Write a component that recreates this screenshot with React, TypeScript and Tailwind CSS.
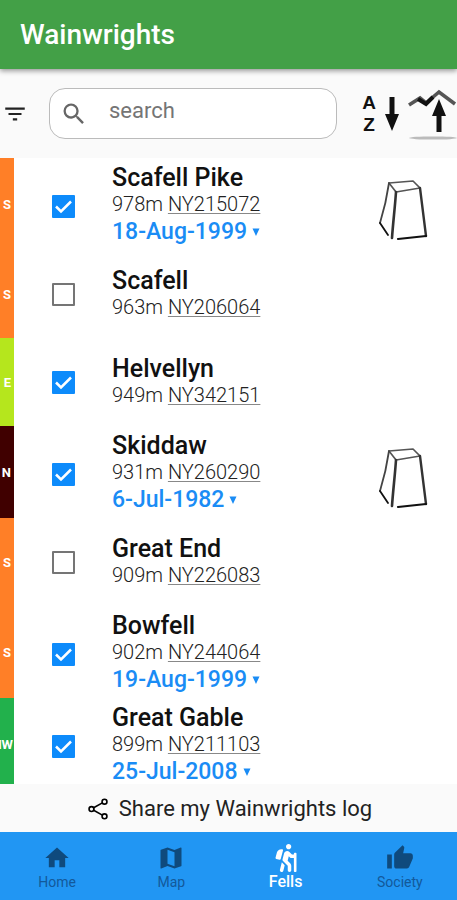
import React, { useState } from 'react';
import { FaHiking } from 'react-icons/fa';
import { IoShareSocialOutline } from 'react-icons/io5';
import { MdFilterList, MdHome, MdMap, MdSearch, MdThumbUp } from 'react-icons/md';

interface Fell {
  name: string;
  height: number;
  grid: string;
  area: string;
  climbed: boolean;
  date?: string;
  trig?: boolean;
}

const FELLS: Fell[] = [
  { name: 'Scafell Pike', height: 978, grid: 'NY215072', area: 'S', climbed: true, date: '18-Aug-1999', trig: true },
  { name: 'Scafell', height: 963, grid: 'NY206064', area: 'S', climbed: false },
  { name: 'Helvellyn', height: 949, grid: 'NY342151', area: 'E', climbed: true },
  { name: 'Skiddaw', height: 931, grid: 'NY260290', area: 'N', climbed: true, date: '6-Jul-1982', trig: true },
  { name: 'Great End', height: 909, grid: 'NY226083', area: 'S', climbed: false },
  { name: 'Bowfell', height: 902, grid: 'NY244064', area: 'S', climbed: true, date: '19-Aug-1999' },
  { name: 'Great Gable', height: 899, grid: 'NY211103', area: 'NW', climbed: true, date: '25-Jul-2008' }
];

const AREA_STYLES: Record<string, string> = {
  S: 'bg-[#ff7f27] pr-[3px]',
  E: 'bg-[#b5e61d] pr-[3px]',
  N: 'bg-[#400000] pr-[3px]',
  NW: 'bg-[#22b14c] pr-px'
};

function TrigPillar() {
  return (
    <svg viewBox="0 0 50 62" className="mt-2 w-[50px] h-[62px]" fill="none" stroke="#111" strokeLinecap="round" strokeLinejoin="round" role="img" aria-label="Trig point">
      <path d="M10 4 34 2 41 9 17 13Z" stroke="#555" strokeWidth="1.7" />
      <path d="M10 4C8 18 5 31 1 44" stroke="#444" strokeWidth="1.8" />
      <path d="M1 44 9 56" strokeWidth="1.8" />
      <path d="M17 13C16 28 14 44 13 59" stroke="#333" strokeWidth="2.6" />
      <path d="M41 9C43 24 45 40 47 57" stroke="#333" strokeWidth="2.4" />
      <path d="M19 60 47 57" strokeWidth="2.2" />
    </svg>
  );
}

function DownArrow() {
  return (
    <svg viewBox="0 0 14 36" className="w-3.5 h-9" fill="#111" aria-hidden="true">
      <path d="M4.5 1h5v17H14L7 35 0 18h4.5z" />
    </svg>
  );
}

function SummitIcon() {
  return (
    <svg viewBox="0 0 50 54" className="w-[50px] h-[54px]" fill="none" aria-hidden="true">
      <path d="M2 18 13 11 19 16 32 5 48 17" stroke="#555" strokeWidth="3.6" />
      <path d="M11 12 19 17 26 10" stroke="#111" strokeWidth="4" />
      <path d="M32 12 39 29H34.500V45H29.500V29H25z" fill="#111" />
      <ellipse cx="26" cy="51" rx="24" ry="1.600" fill="#bbb" />
    </svg>
  );
}

function FellRow({ fell }: { fell: Fell }) {
  const [climbed, setClimbed] = useState(fell.climbed);
  const id = `fell-${fell.grid}`;

  return (
    <li className={`flex shrink-0 bg-white ${fell.date ? 'h-[92px]' : 'h-[88px]'}`}>
      <div className={`flex w-3.5 shrink-0 items-center justify-end overflow-hidden pt-0.5 text-[13px] font-bold text-white ${AREA_STYLES[fell.area]}`}>
        {fell.area}
      </div>
      <div className={`flex flex-1 items-center pl-[38px] pr-7 ${fell.date ? 'pt-1' : ''}`}>
        <span className="relative flex size-[23px] shrink-0">
          <input
            id={id}
            type="checkbox"
            checked={climbed}
            onChange={e => setClimbed(e.target.checked)}
            className="peer size-full appearance-none rounded-[1px] border-2 border-[#757575] bg-white checked:border-[#0d8bfb] checked:bg-[#0d8bfb]"
          />
          <svg viewBox="0 0 23 23" className="pointer-events-none absolute inset-0 hidden peer-checked:block" fill="none" stroke="#fff" strokeWidth="2.500" aria-hidden="true">
            <path d="M4 11.500 9 16.500 19 6.500" />
          </svg>
        </span>
        <div className="ml-[37px] flex-1">
          <label htmlFor={id} className="block text-[25px] leading-[26px] font-medium text-[#111]">{fell.name}</label>
          <p className="text-xl leading-[26px] font-light text-[#222]">
            {fell.height}m <a href={`#${fell.grid}`} className="underline decoration-[#888] decoration-1 underline-offset-2">{fell.grid}</a>
          </p>
          {fell.date && (
            <button className="flex items-center gap-1 text-[23px] leading-[30px] font-medium text-[#1a8cf5]">
              {fell.date}
              <svg viewBox="0 0 10 10" className="size-2.5" fill="currentColor" aria-hidden="true">
                <path d="M1.500 1.500h7L5 9z" />
              </svg>
            </button>
          )}
        </div>
        {fell.trig && <TrigPillar />}
      </div>
    </li>
  );
}

const TABS = [
  { label: 'Home', icon: MdHome },
  { label: 'Map', icon: MdMap },
  { label: 'Fells', icon: FaHiking },
  { label: 'Society', icon: MdThumbUp }
];

export default function App() {
  const [search, setSearch] = useState('');
  const [tab, setTab] = useState('Fells');

  return (
    <div className="flex h-screen flex-col bg-[#fafafa] font-['Roboto',sans-serif]">
      <header className="z-10 flex h-[69px] shrink-0 items-center bg-[#43a047] px-5 shadow-[0_2px_5px_rgba(0,0,0,0.4)]">
        <h1 className="text-[28px] leading-8 font-medium text-white">Wainwrights</h1>
      </header>

      <div className="flex h-[89px] shrink-0 items-center pl-0.5">
        <button aria-label="Filter" className="text-[#222]">
          <MdFilterList className="size-[26px]" />
        </button>
        <div className="ml-[21px] flex h-[51px] flex-1 items-center rounded-2xl border border-[#bbb] bg-white pl-2.5">
          <MdSearch className="size-7 shrink-0 text-[#666]" />
          <input
            type="text"
            aria-label="Search fells"
            placeholder="search"
            value={search}
            onChange={e => setSearch(e.target.value)}
            className="ml-[21px] w-full min-w-0 bg-transparent pb-1.5 text-[22px] leading-8 outline-none placeholder:text-[#757575]"
          />
        </div>
        <button aria-label="Sort by name" className="ml-6 flex items-center gap-2 text-[#111]">
          <span className="flex w-4 flex-col items-center font-['Liberation_Sans',sans-serif] text-[19px] leading-[22px] font-bold">
            <span>A</span>
            <span>Z</span>
          </span>
          <DownArrow />
        </button>
        <button aria-label="Sort by height" className="ml-2">
          <SummitIcon />
        </button>
      </div>

      <ul className="flex min-h-0 flex-1 flex-col overflow-y-auto [scrollbar-width:none]">
        {FELLS.map(f => (
          <FellRow key={f.grid} fell={f} />
        ))}
      </ul>

      <button className="flex h-12 shrink-0 items-center justify-center gap-2 pt-0.5 text-[22px] leading-8 text-[#222]">
        <IoShareSocialOutline className="size-[26px] text-black" />
        Share my Wainwrights log
      </button>

      <nav className="grid h-[68px] shrink-0 grid-cols-4 bg-[#2196f3]">
        {TABS.map(({ label, icon: Icon }) => (
          <button
            key={label}
            onClick={() => setTab(label)}
            className={`flex flex-col items-center justify-center leading-5 ${tab === label ? 'pt-1 text-base font-medium text-white' : 'pt-1 text-sm text-[#13599a]'}`}
          >
            <Icon className={tab === label ? 'size-7' : 'size-7 text-[#0f4a7d]'} />
            {label}
          </button>
        ))}
      </nav>
    </div>
  );
}
